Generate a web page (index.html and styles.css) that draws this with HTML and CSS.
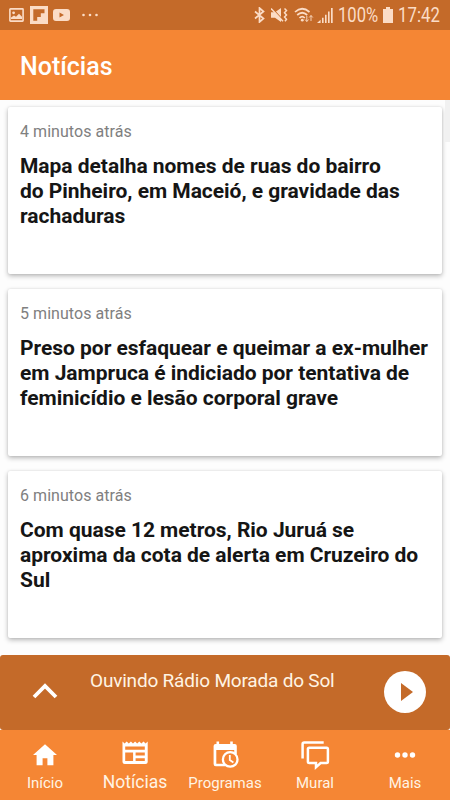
FILE: index.html
```
<!DOCTYPE html>
<html lang="pt-BR">
<head>
    <meta charset="UTF-8">
    <meta name="viewport" content="width=device-width, initial-scale=1.0">
    <title>Notícias</title>
    <link rel="stylesheet" href="styles.css">
</head>
<body>
    <!-- Barra de status -->
    <div class="status-bar">
        <div class="status-left">
            <svg class="icon-photo" width="15" height="14" viewBox="0 0 15 14">
                <rect x="0.9" y="0.9" width="13.2" height="12.2" rx="0.6" fill="none" stroke="currentColor" stroke-width="1.6"/>
                <circle cx="4.6" cy="4.8" r="1.4" fill="currentColor"/>
                <path d="M2 11V9.5l3-2 2 1.2 3-3 3 3V11z" fill="currentColor"/>
            </svg>
            <svg class="icon-flip" width="18" height="18" viewBox="0 0 18 18">
                <path fill="currentColor" fill-rule="evenodd" d="M0 0h18v18H0zM3.3 3.3v11.4h3.9V11h3.6V7.2h3.7V3.3z"/>
            </svg>
            <svg class="icon-video" width="17" height="12" viewBox="0 0 17 12">
                <path fill="currentColor" fill-rule="evenodd" d="M3 0h11q3 0 3 3v6q0 3-3 3H3q-3 0-3-3V3q0-3 3-3zM6.5 3.5v5L11 6z"/>
            </svg>
            <svg class="icon-dots" width="16" height="4" viewBox="0 0 16 4">
                <g fill="currentColor"><circle cx="1.5" cy="2" r="1.3"/><circle cx="8" cy="2" r="1.3"/><circle cx="14.5" cy="2" r="1.3"/></g>
            </svg>
        </div>
        <div class="status-right">
            <svg class="icon-bluetooth" width="11" height="16" viewBox="0 0 11 16">
                <path d="M1 4.5l8.5 7L5.5 15V1l4 3.5-8.5 7" fill="none" stroke="currentColor" stroke-width="1.7"/>
            </svg>
            <svg class="icon-mute" width="17" height="16" viewBox="0 0 17 16">
                <path d="M0 5.2h4L10 1v14l-6-4.2H0z" fill="currentColor"/>
                <path d="M1.4 1.6l11 11.8" stroke="#c46a29" stroke-width="1.2"/>
                <path d="M0 1.5l12 12.8" stroke="currentColor" stroke-width="1.5"/>
                <path d="M13.5 1.5l2 2-2 2.2 2 2.2-2 2.2 2 2.2-1.5 2" fill="none" stroke="currentColor" stroke-width="1.5"/>
            </svg>
            <svg class="icon-wifi" width="20" height="16" viewBox="0 0 20 16">
                <g fill="none" stroke="currentColor" stroke-width="1.7">
                    <path d="M1 5q7-6.5 14.5 0M3.2 8q5-4.5 10 0M5.5 11q2.7-2.7 5.3 0"/>
                    <path d="M12.8 9v5.5M11 12.5l1.8 2 1.8-2M17 14V8.5M15.2 10.5l1.8-2 1.8 2" stroke-width="0.9"/>
                </g>
                <circle cx="8.3" cy="13.2" r="1.4" fill="currentColor"/>
            </svg>
            <svg class="icon-signal" width="16" height="15" viewBox="0 0 16 15">
                <path d="M0 15l3.6-3.2V15zM5 9.8h1.6V15H5zM8 6.8h1.6V15H8zM11 3.6h1.6V15H11zM14 0h1.7v15H14z" fill="currentColor"/>
            </svg>
            <span class="battery-text">100%</span>
            <svg class="icon-battery" width="10" height="16" viewBox="0 0 10 16">
                <path d="M3 0h4v2h3v14H0V2h3z" fill="currentColor"/>
            </svg>
            <span class="clock">17:42</span>
        </div>
    </div>

    <!-- Cabeçalho -->
    <header class="header">
        <h1>Notícias</h1>
    </header>

    <!-- Lista de notícias -->
    <main class="news-list">
        <article class="card">
            <p class="time">4 minutos atrás</p>
            <h2>Mapa detalha nomes de ruas do bairro<br>do Pinheiro, em Maceió, e gravidade das<br>rachaduras</h2>
        </article>
        <article class="card">
            <p class="time">5 minutos atrás</p>
            <h2>Preso por esfaquear e queimar a ex-mulher<br>em Jampruca é indiciado por tentativa de<br>feminicídio e lesão corporal grave</h2>
        </article>
        <article class="card">
            <p class="time">6 minutos atrás</p>
            <h2>Com quase 12 metros, Rio Juruá se<br>aproxima da cota de alerta em Cruzeiro do<br>Sul</h2>
        </article>
        <div class="scrollbar"></div>
    </main>

    <!-- Player da rádio -->
    <div class="player">
        <svg class="icon-up" width="26" height="16" viewBox="0 0 26 16">
            <path d="M2 14L13 3l11 11" fill="none" stroke="currentColor" stroke-width="3.8"/>
        </svg>
        <p class="player-title">Ouvindo Rádio Morada do Sol</p>
        <svg class="icon-play" width="42" height="42" viewBox="0 0 42 42">
            <circle cx="21" cy="21" r="21" fill="currentColor"/>
            <path d="M17 12v18l12-9z" fill="#c46a29"/>
        </svg>
    </div>

    <!-- Menu inferior -->
    <nav class="bottom-nav">
        <a class="nav-item">
            <svg width="30" height="30" viewBox="0 0 30 30">
                <path d="M15 4.2L3 15h3.6v10.3h6v-7.1h4.8v7.1h6V15H27z" fill="currentColor"/>
            </svg>
            <span>Início</span>
        </a>
        <a class="nav-item active">
            <svg width="30" height="30" viewBox="0 0 30 30">
                <path d="M2.5 1.6l2.1 1.8 2.1-1.8 2.1 1.8 2.1-1.8L13 3.4l2.1-1.8 2.1 1.8 2.1-1.8 2.1 1.8 2.1-1.8 2.1 1.8 2.1-1.8v20.3q0 2.1-2.2 2.1H4.7q-2.2 0-2.2-2.1z" fill="currentColor"/>
                <path d="M5.2 6.5h19.6v3.3H5.2zM5.2 12.6h7.9v8.5H5.2zM15.6 12.6h9.2v2.9h-9.2zM15.6 18.2h9.2v2.9h-9.2z" fill="#f58634"/>
            </svg>
            <span>Notícias</span>
        </a>
        <a class="nav-item">
            <svg width="30" height="30" viewBox="0 0 30 30">
                <path d="M4.8 4h20q2 0 2 2v8h-2.6V10H6.3v13.7H15v2.6H5.8q-2.2 0-2.2-2.2V6q0-2 2-2z" fill="currentColor"/>
                <path d="M7.8 1.5v4M21.5 1.5v4" stroke="currentColor" stroke-width="2.6"/>
                <circle cx="20.2" cy="19.4" r="7.3" fill="#f58634" stroke="currentColor" stroke-width="2.3"/>
                <path d="M19.8 15v5l3.6 2.4" fill="none" stroke="currentColor" stroke-width="1.8"/>
            </svg>
            <span>Programas</span>
        </a>
        <a class="nav-item">
            <svg width="30" height="30" viewBox="0 0 30 30">
                <g fill="none" stroke="currentColor" stroke-width="2.5">
                    <path d="M2.6 18.5V4.2q0-1.6 1.6-1.6h19.5"/>
                    <path d="M9.2 7.8h17.4q1.3 0 1.3 1.3v12.7q0 1.3-1.3 1.3h-6L16 27.2V23.1H9.2q-1.3 0-1.3-1.3V9.1q0-1.3 1.3-1.3z"/>
                </g>
            </svg>
            <span>Mural</span>
        </a>
        <a class="nav-item">
            <svg width="30" height="30" viewBox="0 0 30 30">
                <g fill="currentColor"><circle cx="7.5" cy="15" r="2.7"/><circle cx="15" cy="15" r="2.7"/><circle cx="22.5" cy="15" r="2.7"/></g>
            </svg>
            <span>Mais</span>
        </a>
    </nav>
</body>
</html>
```

FILE: styles.css
```
/* Base */
* {
    box-sizing: border-box;
}

body {
    margin: 0;
    height: 800px;
    display: flex;
    flex-direction: column;
    overflow: hidden;
    background-color: #fdfdfd;
    color: #fff;
    font-family: Roboto, sans-serif;
}

h1, h2, p {
    margin: 0;
}

svg {
    display: block;
    flex: none;
}

/* Barra de status */
.status-bar {
    flex: none;
    height: 30px;
    display: flex;
    justify-content: space-between;
    align-items: center;
    padding: 0 9px;
    background-color: #c46a29;
    color: #fbdcc6;
}

.status-left, .status-right {
    display: flex;
    align-items: center;
}

.icon-flip {
    margin-left: 6px;
}

.icon-video {
    margin-left: 5px;
}

.icon-dots {
    margin-left: 12px;
}

.icon-mute {
    margin-left: 6px;
}

.icon-wifi {
    margin-left: 6px;
}

.icon-signal {
    margin-left: 3px;
}

.status-right span {
    font-size: 20px;
    line-height: 30px;
    white-space: nowrap;
}

.battery-text {
    width: 41px;
    margin-left: 5px;
    transform: scaleX(0.83);
    transform-origin: left;
}

.icon-battery {
    margin-left: 4px;
}

.clock {
    width: 43px;
    margin-left: 5px;
    transform: scaleX(0.84);
    transform-origin: left;
}

/* Cabeçalho */
.header {
    flex: none;
    height: 70px;
    display: flex;
    align-items: center;
    padding: 3px 20px 0;
    background-color: #f58634;
}

.header h1 {
    font-size: 25px;
    font-weight: 500;
}

/* Lista de notícias */
.news-list {
    position: relative;
    height: 555px;
    display: flex;
    flex-direction: column;
    gap: 15px;
    padding: 7px 8px 0;
}

.card {
    flex: none;
    height: 167px;
    padding: 15px 12px;
    border-radius: 2px;
    background-color: #fff;
    box-shadow: 0 2px 5px rgba(0, 0, 0, 0.28), 0 0 2px rgba(0, 0, 0, 0.1);
}

.time {
    font-size: 16px;
    line-height: 20px;
    letter-spacing: 0.05px;
    color: #808080;
}

.card h2 {
    margin-top: 12px;
    font-size: 21px;
    font-weight: 700;
    line-height: 25px;
    letter-spacing: -0.03px;
    white-space: nowrap;
    color: #151515;
}

.scrollbar {
    position: absolute;
    top: 0;
    right: 0;
    width: 5px;
    height: 42px;
    background-color: #f1f1f1;
}

/* Player */
.player {
    flex: none;
    height: 75px;
    display: flex;
    align-items: flex-start;
    padding: 0 24px 0 32px;
    border-radius: 3px;
    background-color: #c46a29;
}

.icon-up {
    margin-top: 28px;
}

.player-title {
    flex: 1;
    margin: 14px 0 0 32px;
    font-size: 19px;
    line-height: 24px;
    letter-spacing: -0.19px;
    white-space: nowrap;
    color: #fff4e4;
}

.icon-play {
    margin-top: 16px;
}

/* Menu inferior */
.bottom-nav {
    flex: none;
    height: 70px;
    display: grid;
    grid-template-columns: repeat(5, 1fr);
    background-color: #f58634;
}

.nav-item {
    display: flex;
    flex-direction: column;
    align-items: center;
    padding-top: 10px;
}

.nav-item span {
    margin-top: 3px;
    font-size: 15px;
    line-height: 20px;
    color: #fff4e4;
}

.nav-item.active span {
    margin-top: 2px;
    font-size: 17.5px;
}
```
